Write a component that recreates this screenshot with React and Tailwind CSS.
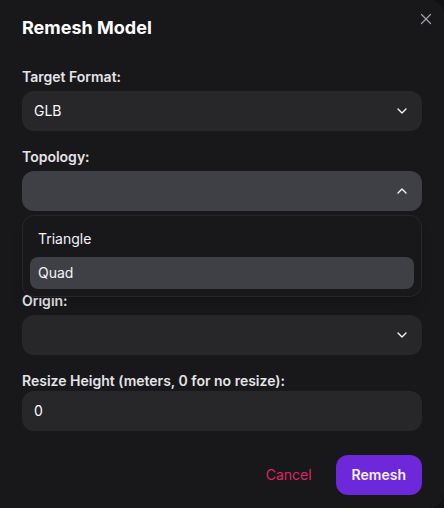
import { ChevronDown, ChevronUp, X } from "lucide-react";

function Field({ label, children, className = "", tight = false }) {
  return (
    <div className={className}>
      <label className={`block text-sm font-semibold leading-5 text-zinc-200 ${tight ? "mb-0" : "mb-1"}`}>{label}</label>
      {children}
    </div>
  );
}

function SelectBox({ value, open }) {
  return (
    <div
      className={`flex h-10 items-center justify-between rounded-xl pl-3 pr-3 text-sm ${
        open ? "bg-[#3f3f46]" : "bg-[#27272a]"
      }`}
    >
      <span className="text-zinc-50">{value}</span>
      {open ? (
        <ChevronUp size={16} className="text-zinc-100" />
      ) : (
        <ChevronDown size={16} className="text-zinc-100" />
      )}
    </div>
  );
}

export default function App() {
  return (
    <div className="h-[508px] w-[444px] overflow-hidden bg-[#111113]" style={{ fontFamily: "Inter, 'Noto Sans', sans-serif" }}>
      <div className="relative h-full w-full rounded-r-[14px] bg-[#18181b] px-[22px] pt-[14px]">
        <button type="button" className="absolute right-[9px] top-[10px] text-zinc-400">
          <X size={18} strokeWidth={1.7} />
        </button>

        <h2 className="text-lg font-bold leading-7 text-white">Remesh Model</h2>

        <div className="mt-[25px]">
          <Field label="Target Format:">
            <SelectBox value="GLB" />
          </Field>

          <Field label="Topology:" className="relative mt-4">
            <SelectBox value="" open />
            <div className="absolute left-0 right-0 top-[68px] z-10 rounded-xl border border-[#27272a] bg-[#18181b] p-[7px] shadow-lg">
              <div className="flex h-8 items-center rounded-lg px-2 text-sm text-zinc-100">Triangle</div>
              <div className="mt-0.5 flex h-8 items-center rounded-lg bg-[#3f3f46] px-2 text-sm text-zinc-100">Quad</div>
            </div>
          </Field>

          <Field label="Origin:" className="mt-[80px]">
            <SelectBox value="" />
          </Field>

          <Field label="Resize Height (meters, 0 for no resize):" className="mt-4" tight>
            <div className="flex h-10 items-center rounded-xl bg-[#27272a] px-3 text-sm text-zinc-50">0</div>
          </Field>
        </div>

        <div className="mt-6 flex items-center justify-end gap-2">
          <button type="button" className="h-10 rounded-xl px-4 text-sm text-[#df2560]">
            Cancel
          </button>
          <button type="button" className="h-10 rounded-xl bg-[#6d28d9] px-4 text-sm font-semibold text-violet-50">
            Remesh
          </button>
        </div>
      </div>
    </div>
  );
}
